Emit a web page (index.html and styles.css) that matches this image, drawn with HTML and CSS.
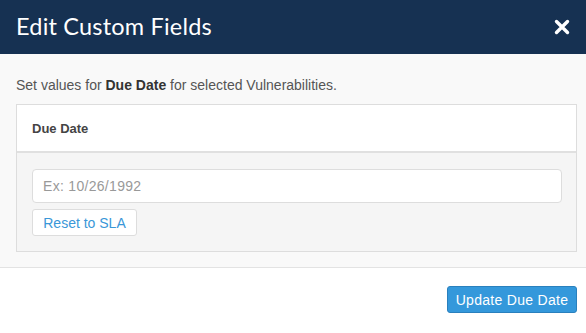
FILE: index.html
```html
<!DOCTYPE html>
<html>
<head>
<meta charset="utf-8">
<link rel="stylesheet" href="styles.css">
</head>
<body>
<div class="modal">
  <header class="modal-header">
    <h1 class="modal-title">Edit Custom Fields</h1>
    <button class="close" aria-label="Close">
      <svg width="16" height="16" viewBox="0 0 16 16"><path d="M2.5 2.5 L13.5 13.5 M13.5 2.5 L2.5 13.5" stroke="#fff" stroke-width="3.4" stroke-linecap="round"/></svg>
    </button>
  </header>
  <main class="modal-body">
    <p class="intro">Set values for <strong>Due Date</strong> for selected Vulnerabilities.</p>
    <section class="panel">
      <div class="panel-heading">Due Date</div>
      <div class="panel-body">
        <input class="date-input" type="text" placeholder="Ex: 10/26/1992">
        <button class="btn btn-default">Reset to SLA</button>
      </div>
    </section>
  </main>
  <footer class="modal-footer">
    <button class="btn btn-primary">Update Due Date</button>
  </footer>
</div>
</body>
</html>
```

FILE: styles.css
```css
html, body {
  margin: 0;
  padding: 0;
  background: #ffffff;
}
body {
  font-family: "Liberation Sans", Arial, sans-serif;
  font-size: 14px;
  color: #555555;
}
.modal {
  width: 586px;
  height: 333px;
  display: flex;
  flex-direction: column;
}
.modal-header {
  height: 54px;
  background: #163152;
  display: flex;
  align-items: center;
  justify-content: space-between;
  padding: 0 16px 0 16px;
  box-sizing: border-box;
}
.modal-title {
  margin: 0 0 2px 0;
  font-family: Lato, "Open Sans", sans-serif;
  font-weight: 400;
  font-size: 23.5px;
  color: #ffffff;
  letter-spacing: 0.2px;
}
.close {
  background: none;
  border: 0;
  padding: 0;
  width: 16px;
  height: 16px;
  display: flex;
}
.modal-body {
  background: #f9f9f9;
  border-bottom: 1px solid #e3e3e3;
  padding: 22px 9px 15px 16px;
  height: 214px;
  box-sizing: border-box;
}
.intro {
  margin: 0 0 10px 0;
  line-height: 18px;
  color: #555555;
}
.intro strong {
  color: #333333;
}
.panel {
  border: 1px solid #dddddd;
  background: #f5f5f5;
}
.panel-heading {
  background: #ffffff;
  height: 46px;
  border-bottom: 2px solid #e0e0e0;
  display: flex;
  align-items: center;
  padding-left: 15px;
  font-size: 13px;
  font-weight: bold;
  color: #444444;
}
.panel-body {
  padding: 16px 14px 15px 15px;
  display: flex;
  flex-direction: column;
  align-items: flex-start;
  gap: 6px;
}
.date-input {
  width: 100%;
  height: 34px;
  box-sizing: border-box;
  border: 1px solid #dddddd;
  border-radius: 4px;
  background: #ffffff;
  padding: 0 10px;
  font-family: "Liberation Sans", Arial, sans-serif;
  font-size: 14px;
  letter-spacing: 0.3px;
  color: #555;
}
.date-input::placeholder {
  color: #999999;
}
.btn {
  font-family: "Liberation Sans", Arial, sans-serif;
  font-size: 14px;
  height: 27px;
  border-radius: 3px;
  padding: 0;
  box-sizing: border-box;
  white-space: nowrap;
}
.btn-default {
  background: #ffffff;
  border: 1px solid #dddddd;
  color: #3a97d8;
  width: 105px;
}
.modal-footer {
  flex: 1;
  background: #ffffff;
  display: flex;
  justify-content: flex-end;
  align-items: flex-start;
  padding: 18px 9px 0 0;
}
.btn-primary {
  background: #3498db;
  border: 1px solid #2a80bd;
  color: #ffffff;
  width: 130px;
  letter-spacing: 0.3px;
}
```
